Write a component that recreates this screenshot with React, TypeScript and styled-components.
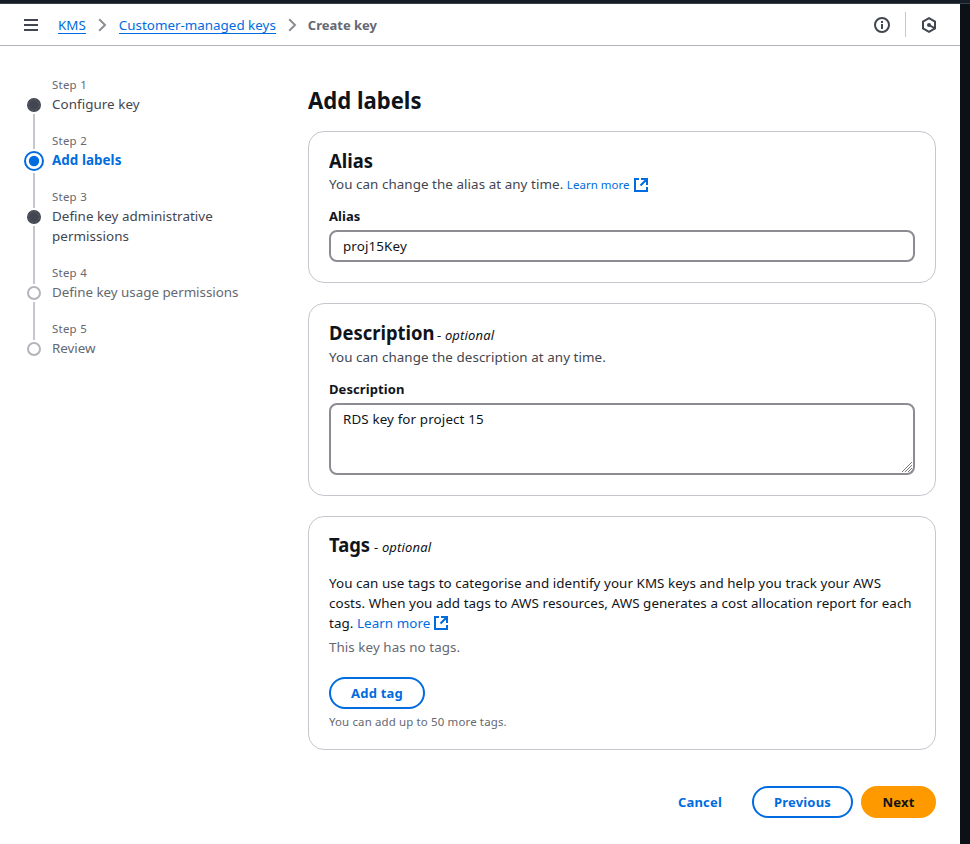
import React from "react";
import styled, { createGlobalStyle, css } from "styled-components";

const c = {
  text: "#0f141a",
  body: "#424650",
  muted: "#656871",
  line: "#c6c6cd",
  control: "#8c8c94",
  blue: "#006ce0",
  orange: "#ff9900",
};

const GlobalStyle = createGlobalStyle`
  * { box-sizing: border-box; }
  html, body { margin: 0; padding: 0; }
  body {
    background: #fff;
    color: ${c.text};
    font: 400 13.4px/20px "Noto Sans", "Open Sans", sans-serif;
    letter-spacing: 0.06px;
    overflow: hidden;
  }
  h1, h2, p, ol { margin: 0; padding: 0; }
  a { color: ${c.blue}; text-decoration: none; }
`;

const small = css`
  font-size: 11.45px;
  letter-spacing: 0.15px;
`;

const Shell = styled.div`
  width: 970px;
  height: 844px;
  display: grid;
  grid-template: 4px 1fr / 960px 10px;
`;
const TopStrip = styled.div`
  grid-column: 1 / -1;
  background: #161d26;
  border-bottom: 1px solid #36404b;
`;
const SideStrip = styled.div`
  background: #0c1017;
`;
const Page = styled.div`
  display: flex;
  flex-direction: column;
`;

const Header = styled.header`
  height: 42px;
  flex: none;
  display: flex;
  align-items: center;
  padding: 0 23px 0 24px;
  border-bottom: 1px solid #b4b4bb;
`;
const Icon = styled.svg`
  display: block;
  flex: none;
`;
const Crumbs = styled.nav`
  display: flex;
  align-items: center;
  margin-left: 20px;
  flex: 1;
`;
const Crumb = styled.a`
  line-height: 17px;
  height: 17px;
  border-bottom: 1px solid ${c.blue};
  letter-spacing: 0;
  margin-top: 1px;
`;
const Current = styled.span`
  color: ${c.muted};
  font-size: 13px;
  font-weight: 700;
  letter-spacing: 0;
  margin-left: -1px;
`;
const Sep = styled(Icon)`
  margin: 0 12px;
`;
const Divider = styled.span`
  width: 1px;
  height: 25px;
  background: ${c.line};
  margin: 0 15px;
`;

const Body = styled.div`
  flex: 1;
  display: grid;
  grid-template-columns: 216px 628px;
  column-gap: 68px;
  padding-left: 24px;
`;

const Steps = styled.ol`
  list-style: none;
  padding-top: 31px;
`;
const Step = styled.li`
  display: grid;
  grid-template-columns: 20px 1fr;
  column-gap: 8px;
`;
const Track = styled.div`
  display: flex;
  flex-direction: column;
  align-items: center;
`;
const Lead = styled.span<{ $active: boolean; $hidden: boolean }>`
  width: 2px;
  height: ${(p) => (p.$active ? 16 : 19)}px;
  background: ${(p) => (p.$hidden ? "transparent" : c.line)};
`;
const Tail = styled.span`
  width: 2px;
  flex: 1;
  background: ${c.line};
`;
const Marker = styled(Icon)<{ $active: boolean }>`
  width: 20px;
  height: ${(p) => (p.$active ? 24 : 18)}px;
  overflow: visible;
`;
const StepText = styled.div<{ $last: boolean }>`
  padding-bottom: ${(p) => (p.$last ? 0 : 19)}px;
`;
const StepLabel = styled.div`
  ${small}
  letter-spacing: 0.25px;
  line-height: 16px;
  margin-bottom: 1px;
  color: ${c.muted};
`;
type State = "done" | "active" | "todo";
const StepTitle = styled.div<{ $state: State }>`
  color: ${(p) => (p.$state === "done" ? c.body : p.$state === "active" ? c.blue : c.muted)};
  letter-spacing: ${(p) => (p.$state === "done" ? 0.05 : -0.03)}px;
  ${(p) => p.$state === "active" && css`font-weight: 700; letter-spacing: 0.06px;`}
`;

const Main = styled.main`
  padding-top: 39px;
`;
const Narrow = styled.span<{ $w: number }>`
  display: inline-block;
  white-space: nowrap;
  letter-spacing: 0;
  width: ${(p) => p.$w}px;
  transform: scaleX(0.92);
  transform-origin: 0 50%;
`;
const Title = styled.h1`
  font-size: 24px;
  line-height: 30px;
  margin-bottom: 16px;
`;
const Card = styled.section<{ $h: number }>`
  height: ${(p) => p.$h}px;
  border: 1px solid ${c.line};
  border-radius: 16px;
  padding: 17px 20px 0;
  margin-bottom: 20px;
`;
const CardTitle = styled.h2<{ $h?: number; $line?: number }>`
  display: flex;
  align-items: baseline;
  height: ${(p) => p.$h || 25}px;
  font-size: 20px;
  line-height: ${(p) => p.$line || 24}px;
`;
const Optional = styled.span`
  font-size: 13px;
  font-weight: 400;
  letter-spacing: 0.15px;
  margin-left: 4px;
  i { font-style: italic; }
`;
const Hint = styled.p`
  height: 20px;
  color: ${c.body};
  margin-bottom: 12px;
`;
const Paragraph = styled.p`
  white-space: nowrap;
  padding-top: 16px;
  > span { display: block; }
`;
const External = styled.a<{ $small?: boolean }>`
  ${(p) => p.$small && small}
  ${(p) => p.$small && css`letter-spacing: 0.06px;`}
  svg { display: inline-block; vertical-align: ${(p) => (p.$small ? -3 : -2)}px; margin-left: 4px; }
`;
const Label = styled.label`
  display: block;
  font-size: 13px;
  font-weight: 700;
  letter-spacing: 0.08px;
  margin-bottom: 4px;
`;
const control = css`
  display: block;
  width: 100%;
  border: 2px solid ${c.control};
  border-radius: 8px;
  background: #fff;
  color: ${c.text};
  font: inherit;
  letter-spacing: 0.12px;
  outline: none;
`;
const Input = styled.input`
  ${control}
  height: 32px;
  padding: 0 12px;
`;
const AreaWrap = styled.div`
  position: relative;
`;
const Area = styled.textarea`
  ${control}
  height: 72px;
  padding: 4px 12px;
  resize: none;
`;
const Grip = styled(Icon)`
  position: absolute;
  right: 2px;
  bottom: 2px;
`;
const Empty = styled.p`
  color: ${c.muted};
  margin: 4px 0 20px;
`;
const Limit = styled.p`
  color: ${c.muted};
  ${small}
  line-height: 16px;
  margin-top: 5px;
`;
const Button = styled.button<{ $kind: "outline" | "primary" | "link"; $w: number }>`
  width: ${(p) => p.$w}px;
  height: 32px;
  padding: 0;
  border-radius: 16px;
  border: 2px solid ${(p) => (p.$kind === "outline" ? c.blue : p.$kind === "primary" ? c.orange : "transparent")};
  background: ${(p) => (p.$kind === "primary" ? c.orange : "transparent")};
  color: ${(p) => (p.$kind === "primary" ? c.text : c.blue)};
  font: 700 13px/20px "Noto Sans", "Open Sans", sans-serif;
  letter-spacing: 0.2px;
`;
const Actions = styled.div`
  display: flex;
  justify-content: flex-end;
  gap: 8px;
  margin-top: 36px;
`;

const Chevron = () => (
  <Sep width="9" height="14" viewBox="0 0 9 14" fill="none" stroke={c.control} strokeWidth="2">
    <path d="M1.2 1.2 7 7l-5.8 5.8" />
  </Sep>
);
const ExternalIcon = () => (
  <Icon width="14" height="14" viewBox="0 0 14 14" fill="none" stroke={c.blue} strokeWidth="2">
    <path d="M5 1H1v12h12V9M7 1h6v6M12.500 1.500 6.500 7.500" />
  </Icon>
);

const steps: { title: string; state: State }[] = [
  { title: "Configure key", state: "done" },
  { title: "Add labels", state: "active" },
  { title: "Define key administrative permissions", state: "done" },
  { title: "Define key usage permissions", state: "todo" },
  { title: "Review", state: "todo" },
];

const StepMarker = ({ state }: { state: State }) => {
  const active = state === "active";
  return (
    <Marker $active={active} viewBox={active ? "-10 -12 20 24" : "-10 -9 20 18"} fill="none">
      {state === "done" && (
        <>
          <circle r="7" fill={c.body} />
          <circle r="5.300" stroke="#6b6f79" strokeWidth="0.600" strokeDasharray="3 1" />
        </>
      )}
      {active && (
        <>
          <circle r="9" stroke={c.blue} strokeWidth="2" />
          <circle r="5.200" fill={c.blue} />
        </>
      )}
      {state === "todo" && <circle r="6" stroke="#b4b4bb" strokeWidth="2" />}
    </Marker>
  );
};

export default function App() {
  return (
    <>
      <GlobalStyle />
      <Shell>
        <TopStrip />
        <Page>
          <Header>
            <Icon width="14" height="12" viewBox="0 0 14 12" fill={c.body}>
              <path d="M0 0h14v2H0zM0 5h14v2H0zM0 10h14v2H0z" />
            </Icon>
            <Crumbs>
              <Crumb href="#">KMS</Crumb>
              <Chevron />
              <Crumb href="#">Customer-managed keys</Crumb>
              <Chevron />
              <Current>Create key</Current>
            </Crumbs>
            <Icon width="16" height="16" viewBox="0 0 16 16" fill="none" stroke={c.body} strokeWidth="2">
              <circle cx="8" cy="8" r="7" />
              <path d="M8 4v2M8 7v5" />
            </Icon>
            <Divider />
            <Icon width="16" height="16" viewBox="0 0 16 16" fill="none" stroke={c.body} strokeWidth="2">
              <path d="M8 1.200 14 4.500v7L8 14.800 2 11.500v-7z" />
              <path d="M8 8l5.500 3.200" />
              <circle cx="8" cy="8" r="2" fill={c.body} stroke="none" />
            </Icon>
          </Header>
          <Body>
            <Steps>
              {steps.map((s, i) => (
                <Step key={s.title}>
                  <Track>
                    <Lead $active={s.state === "active"} $hidden={i === 0} />
                    <StepMarker state={s.state} />
                    {i < steps.length - 1 && <Tail />}
                  </Track>
                  <StepText $last={i === steps.length - 1}>
                    <StepLabel>Step {i + 1}</StepLabel>
                    <StepTitle $state={s.state}>{s.title}</StepTitle>
                  </StepText>
                </Step>
              ))}
            </Steps>
            <Main>
              <Title><Narrow $w={114}>Add labels</Narrow></Title>

              <Card $h={152}>
                <CardTitle><Narrow $w={45}>Alias</Narrow></CardTitle>
                <Hint>
                  You can change the alias at any time.{" "}
                  <External href="#" $small>Learn more<ExternalIcon /></External>
                </Hint>
                <Label htmlFor="alias">Alias</Label>
                <Input id="alias" defaultValue="proj15Key" />
              </Card>

              <Card $h={193}>
                <CardTitle $h={26}>
                  <Narrow $w={104}>Description</Narrow>
                  <Optional>- <i>optional</i></Optional>
                </CardTitle>
                <Hint>You can change the description at any time.</Hint>
                <Label htmlFor="description">Description</Label>
                <AreaWrap>
                  <Area id="description" defaultValue="RDS key for project 15" />
                  <Grip width="12" height="12" viewBox="0 0 12 12" stroke="#77777c" strokeWidth="1">
                    <path d="M1 11 11 1M4 11l7-7M7 11l4-4M10 11l1-1" />
                  </Grip>
                </AreaWrap>
              </Card>

              <Card $h={234}>
                <CardTitle $h={23} $line={22}>
                  <Narrow $w={41}>Tags</Narrow>
                  <Optional>- <i>optional</i></Optional>
                </CardTitle>
                <Paragraph>
                  <span>You can use tags to categorise and identify your KMS keys and help you track your AWS</span>
                  <span>costs. When you add tags to AWS resources, AWS generates a cost allocation report for each</span>
                  <span>tag. <External href="#">Learn more<ExternalIcon /></External></span>
                </Paragraph>
                <Empty>This key has no tags.</Empty>
                <Button $kind="outline" $w={96}>Add tag</Button>
                <Limit>You can add up to 50 more tags.</Limit>
              </Card>

              <Actions>
                <Button $kind="link" $w={88}>Cancel</Button>
                <Button $kind="outline" $w={101}>Previous</Button>
                <Button $kind="primary" $w={75}>Next</Button>
              </Actions>
            </Main>
          </Body>
        </Page>
        <SideStrip />
      </Shell>
    </>
  );
}
